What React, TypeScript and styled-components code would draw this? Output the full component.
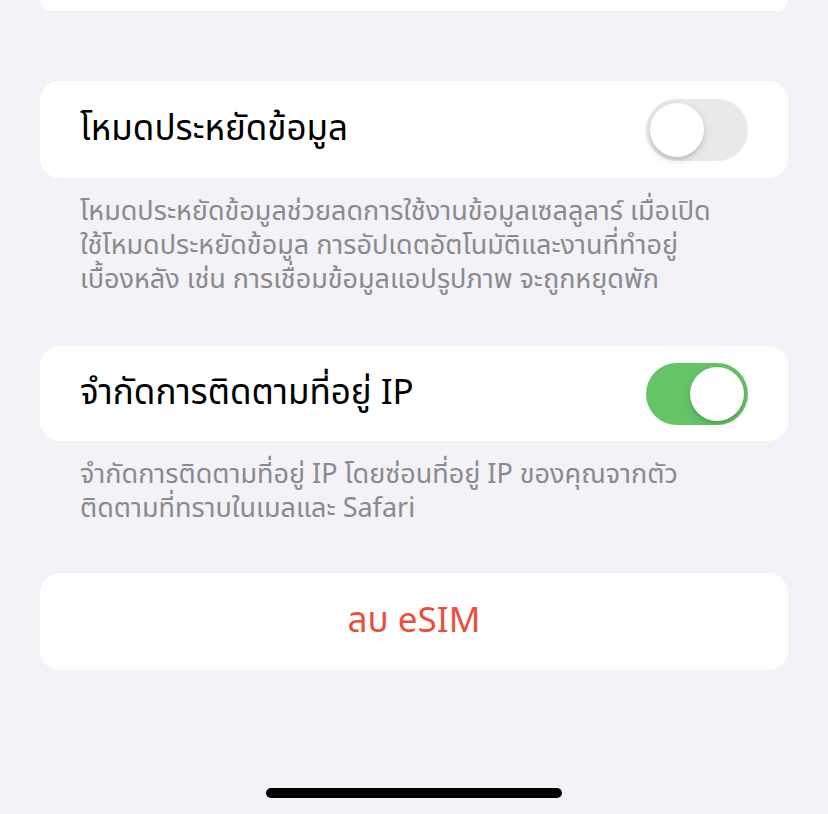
import React from "react";
import styled, { createGlobalStyle } from "styled-components";

const GlobalStyle = createGlobalStyle`
  html, body {
    margin: 0;
    padding: 0;
    background: #f2f2f7;
  }
  body {
    font-family: "Noto Sans Thai", "Noto Sans", "Liberation Sans", sans-serif;
    -webkit-font-smoothing: antialiased;
  }
`;

const Page = styled.div`
  width: 828px;
  height: 814px;
  box-sizing: border-box;
  display: flex;
  flex-direction: column;
  padding: 0 40px;
  overflow: hidden;
  background: #f2f2f7;
`;

const Card = styled.div<{ $height?: number }>`
  background: #ffffff;
  border-radius: 20px;
  height: ${(p) => (p.$height ? `${p.$height}px` : "auto")};
  display: flex;
  flex-direction: column;
`;

const TopStub = styled.div`
  background: #ffffff;
  border-radius: 0 0 20px 20px;
  height: 11px;
  margin-bottom: 70px;
`;

const Row = styled.div`
  flex: 1;
  display: flex;
  align-items: center;
  justify-content: space-between;
  padding: 0 40px;
`;

const RowTitle = styled.span`
  font-size: 35px;
  color: #000;
  line-height: 1;
`;

const Switch = styled.div<{ $on: boolean }>`
  width: 102px;
  height: 62px;
  border-radius: 31px;
  box-sizing: border-box;
  padding: 4px;
  display: flex;
  justify-content: ${(p) => (p.$on ? "flex-end" : "flex-start")};
  background: ${(p) => (p.$on ? "#65c466" : "#e9e9eb")};
`;

const Knob = styled.div`
  width: 54px;
  height: 54px;
  border-radius: 50%;
  background: #fff;
  box-shadow: 0 3px 8px rgba(0, 0, 0, 0.15), 0 3px 1px rgba(0, 0, 0, 0.06);
`;

const Footer = styled.div<{ $after: number }>`
  padding: 17px 40px 0 40px;
  height: ${(p) => p.$after}px;
  box-sizing: border-box;
  font-size: 27px;
  line-height: 34px;
  color: #8a8a8e;
  white-space: nowrap;
`;

const FooterLine = styled.span`
  display: block;
`;

const ActionButton = styled.button`
  width: 100%;
  height: 97px;
  border: none;
  background: #fff;
  border-radius: 20px;
  font-family: inherit;
  font-size: 35px;
  color: #eb4e3d;
  padding: 0;
`;

const Spacer = styled.div`
  flex: 1;
`;

const HomeIndicator = styled.div`
  align-self: center;
  width: 296px;
  height: 10px;
  border-radius: 5px;
  background: #000;
  margin-bottom: 16px;
`;

function Toggle({ on }: { on: boolean }) {
  return (
    <Switch $on={on}>
      <Knob />
    </Switch>
  );
}

export default function App() {
  return (
    <>
      <GlobalStyle />
      <Page>
        <TopStub />
        <Card $height={97}>
          <Row>
            <RowTitle>โหมดประหยัดข้อมูล</RowTitle>
            <Toggle on={false} />
          </Row>
        </Card>
        <Footer $after={168}>
          <FooterLine>โหมดประหยัดข้อมูลช่วยลดการใช้งานข้อมูลเซลลูลาร์ เมื่อเปิด</FooterLine>
          <FooterLine>ใช้โหมดประหยัดข้อมูล การอัปเดตอัตโนมัติและงานที่ทำอยู่</FooterLine>
          <FooterLine>เบื้องหลัง เช่น การเชื่อมข้อมูลแอปรูปภาพ จะถูกหยุดพัก</FooterLine>
        </Footer>
        <Card $height={95}>
          <Row>
            <RowTitle>จำกัดการติดตามที่อยู่ IP</RowTitle>
            <Toggle on />
          </Row>
        </Card>
        <Footer $after={132}>
          <FooterLine>จำกัดการติดตามที่อยู่ IP โดยซ่อนที่อยู่ IP ของคุณจากตัว</FooterLine>
          <FooterLine>ติดตามที่ทราบในเมลและ Safari</FooterLine>
        </Footer>
        <ActionButton>ลบ eSIM</ActionButton>
        <Spacer />
        <HomeIndicator />
      </Page>
    </>
  );
}
